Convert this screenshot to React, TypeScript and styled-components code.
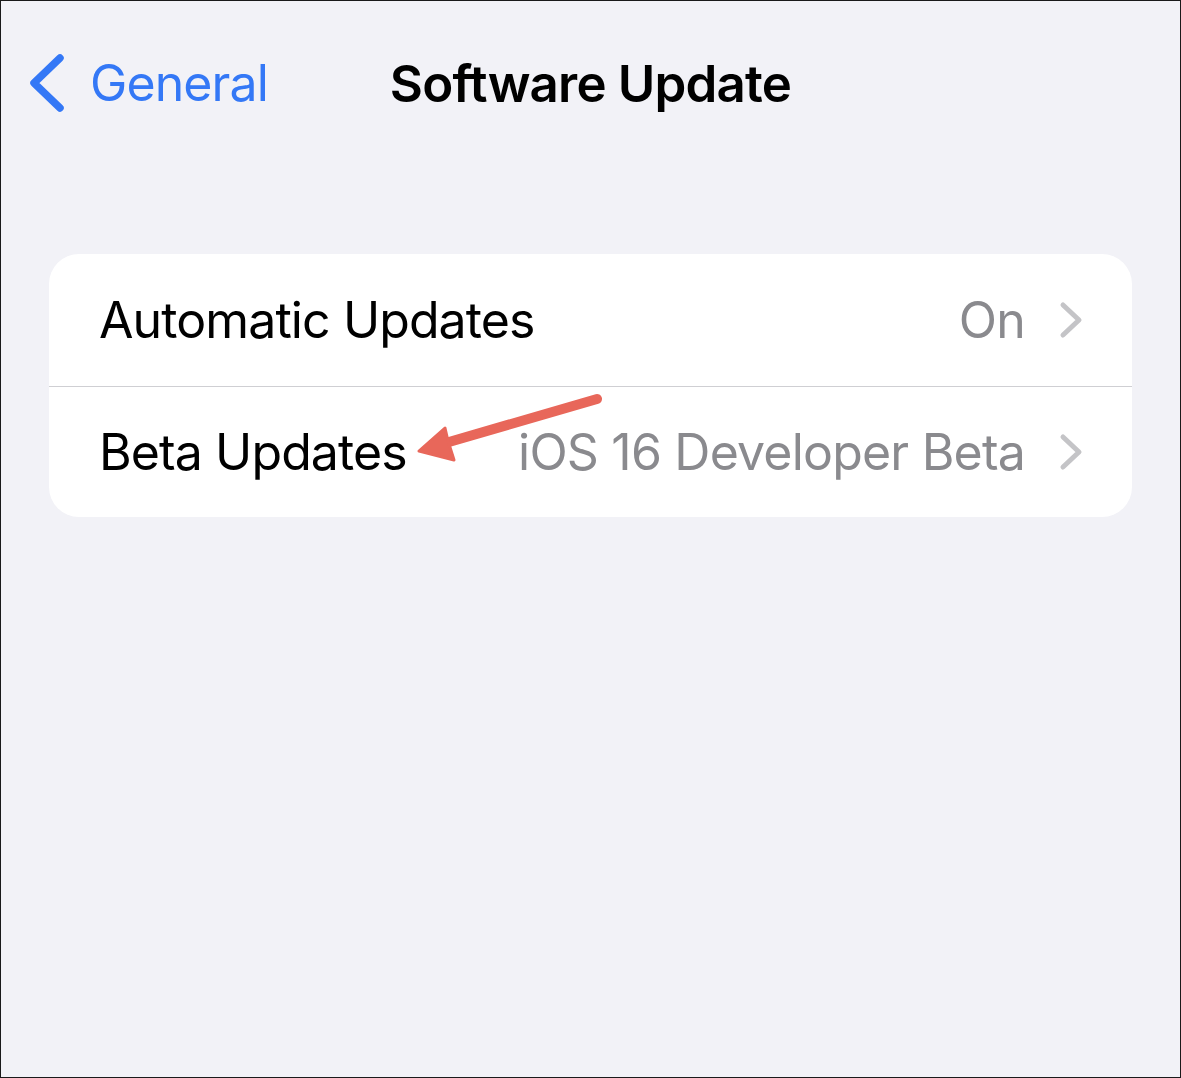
import React from "react";
import styled, { createGlobalStyle } from "styled-components";

const Global = createGlobalStyle`
  html, body { margin: 0; padding: 0; background: #f2f2f7; }
  * { box-sizing: border-box; }
`;

const Frame = styled.div`
  position: relative;
  width: 1181px;
  height: 1078px;
  border: 1px solid #1a1a1a;
  background: #f2f2f7;
  font-family: Inter, "Noto Sans", sans-serif;
  overflow: hidden;
`;

const NavBar = styled.header`
  height: 164px;
  display: grid;
  grid-template-columns: 1fr auto 1fr;
  align-items: center;
`;

const BackButton = styled.div`
  display: flex;
  align-items: center;
  gap: 25px;
  padding-left: 28px;
  color: #3478f6;
  font-size: 50px;
  letter-spacing: -0.9px;
`;

const Title = styled.h1`
  margin: 0;
  font-size: 51px;
  font-weight: 600;
  color: #000;
  letter-spacing: -0.8px;
`;

const Card = styled.section`
  margin: 89px 48px 0;
  background: #fff;
  border-radius: 30px;
  overflow: hidden;
`;

const Row = styled.div<{ $divider?: boolean }>`
  height: 131.5px;
  display: flex;
  align-items: center;
  padding: 0 49px 0 50px;
  border-top: ${(p) => (p.$divider ? "1.5px solid #cfcfd3" : "none")};
`;

const Label = styled.span`
  flex: 1;
  font-size: 50px;
  color: #000;
  letter-spacing: -0.9px;
`;

const Value = styled.span`
  font-size: 50px;
  color: #8a8a8e;
  letter-spacing: -0.8px;
  margin-right: 34px;
`;

const Overlay = styled.svg`
  position: absolute;
  left: 0;
  top: 0;
  pointer-events: none;
`;

const BackChevron = () => (
  <svg width="36" height="58" viewBox="0 0 36 58">
    <path d="M31 4 L5 29 L31 54" fill="none" stroke="#3478f6" strokeWidth="7.5" strokeLinecap="round" strokeLinejoin="round" />
  </svg>
);

const Disclosure = () => (
  <svg width="24" height="38" viewBox="0 0 24 38">
    <path d="M4 4 L20 19 L4 34" fill="none" stroke="#c4c4c7" strokeWidth="5" strokeLinecap="round" strokeLinejoin="round" />
  </svg>
);

export default function App() {
  return (
    <>
      <Global />
      <Frame>
        <NavBar>
          <BackButton>
            <BackChevron />
            <span>General</span>
          </BackButton>
          <Title>Software Update</Title>
          <div />
        </NavBar>
        <Card>
          <Row>
            <Label>Automatic Updates</Label>
            <Value>On</Value>
            <Disclosure />
          </Row>
          <Row $divider>
            <Label>Beta Updates</Label>
            <Value>iOS 16 Developer Beta</Value>
            <Disclosure />
          </Row>
        </Card>
        <Overlay width="1181" height="1078" viewBox="0 0 1181 1078">
          <line x1="596" y1="398" x2="448" y2="441" stroke="#e8675a" strokeWidth="10" strokeLinecap="round" />
          <path d="M418 450 L444 427 L447 440 L453 459 Z" fill="#e8675a" stroke="#e8675a" strokeWidth="3" strokeLinejoin="round" />
        </Overlay>
      </Frame>
    </>
  );
}
